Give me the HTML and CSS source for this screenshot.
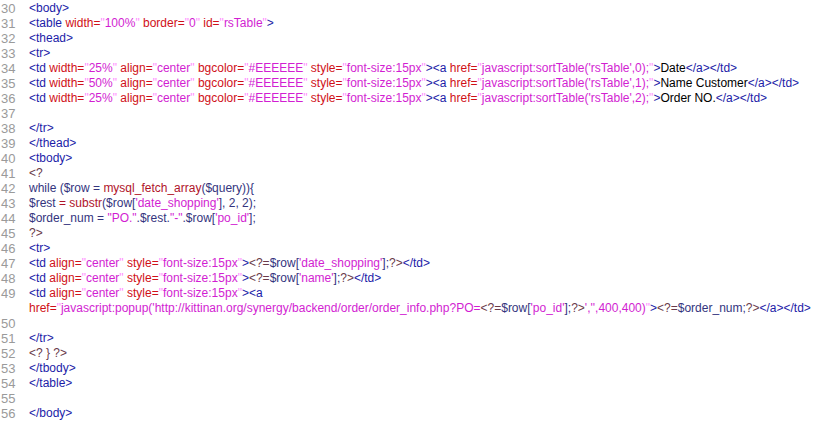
FILE: index.html
```html
<!DOCTYPE html>
<html lang="en">
<head>
    <meta charset="UTF-8">
    <title>rsTable source</title>
    <link rel="stylesheet" href="styles.css">
</head>
<body>
    <div class="code">
        <div class="ln">30</div><div class="src"><span class="tag">&lt;body&gt;</span></div>
        <div class="ln">31</div><div class="src"><span class="tag">&lt;table</span> <span class="att">width=</span><span class="q">"</span><span class="val">100%</span><span class="q">"</span> <span class="att">border=</span><span class="q">"</span><span class="val">0</span><span class="q">"</span> <span class="att">id=</span><span class="q">"</span><span class="val">rsTable</span><span class="q">"</span><span class="tag">&gt;</span></div>
        <div class="ln">32</div><div class="src"><span class="tag">&lt;thead&gt;</span></div>
        <div class="ln">33</div><div class="src"><span class="tag">&lt;tr&gt;</span></div>
        <div class="ln">34</div><div class="src"><span class="tag">&lt;td</span> <span class="att">width=</span><span class="q">"</span><span class="val">25%</span><span class="q">"</span> <span class="att">align=</span><span class="q">"</span><span class="val">center</span><span class="q">"</span> <span class="att">bgcolor=</span><span class="q">"</span><span class="val">#EEEEEE</span><span class="q">"</span> <span class="att">style=</span><span class="q">"</span><span class="val">font-size:15px</span><span class="q">"</span><span class="tag">&gt;&lt;a</span> <span class="att">href=</span><span class="q">"</span><span class="val">javascript:sortTable('rsTable',0);</span><span class="q">"</span><span class="tag">&gt;</span>Date<span class="tag">&lt;/a&gt;&lt;/td&gt;</span></div>
        <div class="ln">35</div><div class="src"><span class="tag">&lt;td</span> <span class="att">width=</span><span class="q">"</span><span class="val">50%</span><span class="q">"</span> <span class="att">align=</span><span class="q">"</span><span class="val">center</span><span class="q">"</span> <span class="att">bgcolor=</span><span class="q">"</span><span class="val">#EEEEEE</span><span class="q">"</span> <span class="att">style=</span><span class="q">"</span><span class="val">font-size:15px</span><span class="q">"</span><span class="tag">&gt;&lt;a</span> <span class="att">href=</span><span class="q">"</span><span class="val">javascript:sortTable('rsTable',1);</span><span class="q">"</span><span class="tag">&gt;</span>Name Customer<span class="tag">&lt;/a&gt;&lt;/td&gt;</span></div>
        <div class="ln">36</div><div class="src"><span class="tag">&lt;td</span> <span class="att">width=</span><span class="q">"</span><span class="val">25%</span><span class="q">"</span> <span class="att">align=</span><span class="q">"</span><span class="val">center</span><span class="q">"</span> <span class="att">bgcolor=</span><span class="q">"</span><span class="val">#EEEEEE</span><span class="q">"</span> <span class="att">style=</span><span class="q">"</span><span class="val">font-size:15px</span><span class="q">"</span><span class="tag">&gt;&lt;a</span> <span class="att">href=</span><span class="q">"</span><span class="val">javascript:sortTable('rsTable',2);</span><span class="q">"</span><span class="tag">&gt;</span>Order NO.<span class="tag">&lt;/a&gt;&lt;/td&gt;</span></div>
        <div class="ln">37</div><div class="src"></div>
        <div class="ln">38</div><div class="src"><span class="tag">&lt;/tr&gt;</span></div>
        <div class="ln">39</div><div class="src"><span class="tag">&lt;/thead&gt;</span></div>
        <div class="ln">40</div><div class="src"><span class="tag">&lt;tbody&gt;</span></div>
        <div class="ln">41</div><div class="src"><span class="php">&lt;?</span></div>
        <div class="ln">42</div><div class="src"><span class="var">while ($row = </span><span class="fn">mysql_fetch_array</span><span class="var">($query)){</span></div>
        <div class="ln">43</div><div class="src"><span class="var">$rest</span> <span class="fn">= substr</span><span class="var">($row[</span><span class="str">'date_shopping'</span><span class="var">], 2, 2);</span></div>
        <div class="ln">44</div><div class="src"><span class="var">$order_num = </span><span class="str">"PO."</span><span class="var">.$rest.</span><span class="str">"-"</span><span class="var">.$row[</span><span class="str">'po_id'</span><span class="var">];</span></div>
        <div class="ln">45</div><div class="src"><span class="php">?&gt;</span></div>
        <div class="ln">46</div><div class="src"><span class="tag">&lt;tr&gt;</span></div>
        <div class="ln">47</div><div class="src"><span class="tag">&lt;td</span> <span class="att">align=</span><span class="q">"</span><span class="val">center</span><span class="q">"</span> <span class="att">style=</span><span class="q">"</span><span class="val">font-size:15px</span><span class="q">"</span><span class="tag">&gt;</span><span class="php">&lt;?=</span><span class="var">$row[</span><span class="str">'date_shopping'</span><span class="var">];</span><span class="php">?&gt;</span><span class="tag">&lt;/td&gt;</span></div>
        <div class="ln">48</div><div class="src"><span class="tag">&lt;td</span> <span class="att">align=</span><span class="q">"</span><span class="val">center</span><span class="q">"</span> <span class="att">style=</span><span class="q">"</span><span class="val">font-size:15px</span><span class="q">"</span><span class="tag">&gt;</span><span class="php">&lt;?=</span><span class="var">$row[</span><span class="str">'name'</span><span class="var">];</span><span class="php">?&gt;</span><span class="tag">&lt;/td&gt;</span></div>
        <div class="ln">49</div><div class="src"><span class="tag">&lt;td</span> <span class="att">align=</span><span class="q">"</span><span class="val">center</span><span class="q">"</span> <span class="att">style=</span><span class="q">"</span><span class="val">font-size:15px</span><span class="q">"</span><span class="tag">&gt;&lt;a</span> <span class="nw"><span class="att">href=</span><span class="q">"</span><span class="val">javascript:popup('http://kittinan.org/synergy/backend/order/order_info.php?PO=</span><span class="php">&lt;?=</span><span class="var">$row[</span><span class="str">'po_id'</span><span class="var">];</span><span class="php">?&gt;</span><span class="val">','',400,400)</span><span class="q">"</span><span class="tag">&gt;</span><span class="php">&lt;?=</span><span class="var">$order_num;</span><span class="php">?&gt;</span><span class="tag">&lt;/a&gt;&lt;/td&gt;</span></span></div>
        <div class="ln">50</div><div class="src"></div>
        <div class="ln">51</div><div class="src"><span class="tag">&lt;/tr&gt;</span></div>
        <div class="ln">52</div><div class="src"><span class="php">&lt;? } ?&gt;</span></div>
        <div class="ln">53</div><div class="src"><span class="tag">&lt;/tbody&gt;</span></div>
        <div class="ln">54</div><div class="src"><span class="tag">&lt;/table&gt;</span></div>
        <div class="ln">55</div><div class="src"></div>
        <div class="ln">56</div><div class="src"><span class="tag">&lt;/body&gt;</span></div>
    </div>
</body>
</html>
```

FILE: styles.css
```css
body {
    margin: 0;
    background: #ffffff;
    color: #000000;
    font-family: "Liberation Sans", Arial, sans-serif;
    font-size: 12px;
}
.code {
    display: grid;
    grid-template-columns: 29px 1fr;
    line-height: 15px;
    padding-top: 1px;
}
.ln {
    color: #9a9a9a;
    padding-left: 1px;
    font-size: 13px;
}
.src {
    white-space: pre-wrap;
    min-height: 15px;
    padding-right: 8px;
}
.nw { white-space: nowrap; }
.tag { color: #1c1ca8; }
.att { color: #d01018; }
.val { color: #d21ed2; }
.q { color: #ff8cff; }
.var { color: #34347e; }
.fn { color: #b0142a; }
.str { color: #d21ed2; }
.php { color: #6a3a4a; }
```
